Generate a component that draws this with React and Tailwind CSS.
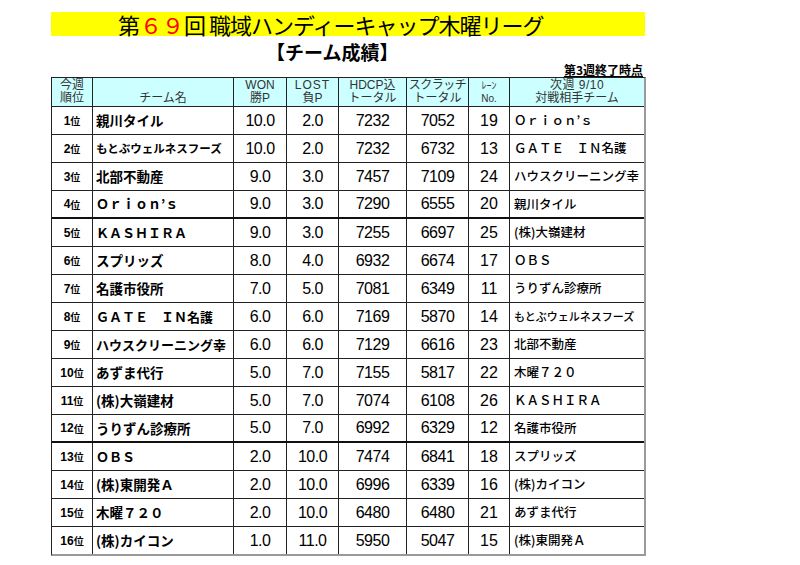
const JP = "font-['Noto_Sans_CJK_JP','Liberation_Sans',sans-serif]";
const NUM = "font-['Liberation_Sans','Noto_Sans_CJK_JP',sans-serif]";

// width of each column, right border included
const COLS = ["w-[41px]", "w-[141px]", "w-[53px]", "w-[52px]", "w-[68px]", "w-[62px]", "w-[41px]", "w-[134px]"];

const rows = [
  { name: "親川タイル", won: "10.0", lost: "2.0", hdcp: "7232", scr: "7052", lane: "19", opp: "Ｏｒｉｏｎ’ｓ" },
  { name: "もとぶウェルネスフーズ", nameSm: true, won: "10.0", lost: "2.0", hdcp: "7232", scr: "6732", lane: "13", opp: "ＧＡＴＥ　ＩＮ名護" },
  { name: "北部不動産", won: "9.0", lost: "3.0", hdcp: "7457", scr: "7109", lane: "24", opp: "ハウスクリーニング幸" },
  { name: "Ｏｒｉｏｎ’ｓ", wide: true, won: "9.0", lost: "3.0", hdcp: "7290", scr: "6555", lane: "20", opp: "親川タイル", thick: true },
  { name: "ＫＡＳＨＩＲＡ", wide: true, won: "9.0", lost: "3.0", hdcp: "7255", scr: "6697", lane: "25", opp: "(株)大嶺建材" },
  { name: "スプリッズ", won: "8.0", lost: "4.0", hdcp: "6932", scr: "6674", lane: "17", opp: "ＯＢＳ" },
  { name: "名護市役所", won: "7.0", lost: "5.0", hdcp: "7081", scr: "6349", lane: "11", opp: "うりずん診療所" },
  { name: "ＧＡＴＥ　ＩＮ名護", wide: true, won: "6.0", lost: "6.0", hdcp: "7169", scr: "5870", lane: "14", opp: "もとぶウェルネスフーズ", oppSm: true },
  { name: "ハウスクリーニング幸", wide: true, won: "6.0", lost: "6.0", hdcp: "7129", scr: "6616", lane: "23", opp: "北部不動産" },
  { name: "あずま代行", won: "5.0", lost: "7.0", hdcp: "7155", scr: "5817", lane: "22", opp: "木曜７２０" },
  { name: "(株)大嶺建材", won: "5.0", lost: "7.0", hdcp: "7074", scr: "6108", lane: "26", opp: "ＫＡＳＨＩＲＡ" },
  { name: "うりずん診療所", won: "5.0", lost: "7.0", hdcp: "6992", scr: "6329", lane: "12", opp: "名護市役所", thick: true },
  { name: "ＯＢＳ", wide: true, won: "2.0", lost: "10.0", hdcp: "7474", scr: "6841", lane: "18", opp: "スプリッズ" },
  { name: "(株)東開発Ａ", won: "2.0", lost: "10.0", hdcp: "6996", scr: "6339", lane: "16", opp: "(株)カイコン" },
  { name: "木曜７２０", won: "2.0", lost: "10.0", hdcp: "6480", scr: "6480", lane: "21", opp: "あずま代行" },
  { name: "(株)カイコン", won: "1.0", lost: "11.0", hdcp: "5950", scr: "5047", lane: "15", opp: "(株)東開発Ａ" },
];

function HeadCell({ w, top, bottom, last }) {
  return (
    <div className={`${w} h-full flex flex-col items-center justify-center whitespace-nowrap ${last ? "" : "border-r border-[#222]"}`}>
      <span className="leading-[13px]">{top}</span>
      <span className="leading-[13px]">{bottom}</span>
    </div>
  );
}

function Row({ row, idx, last }) {
  const cell = "h-full flex items-center border-r border-[#222]";
  const num = `justify-center text-[16px] tracking-[-0.5px] ${NUM}`;
  const border = last ? "h-[27px]" : row.thick ? "h-[28px] border-b-2 border-[#111]" : "h-[28px] border-b border-[#222]";
  return (
    <div className={`flex ${border}`}>
      <div className={`${COLS[0]} ${cell} justify-center font-bold ${JP}`}>
        <span className={`text-[12px] ${NUM}`}>{idx + 1}</span>
        <span className="text-[10px]">位</span>
      </div>
      <div className={`${COLS[1]} ${cell} pl-[3px] font-bold ${JP} whitespace-nowrap ${row.nameSm ? "text-[11.5px]" : row.wide ? "text-[13px]" : "text-[13.5px]"}`}>
        {row.name}
      </div>
      <div className={`${COLS[2]} ${cell} ${num}`}>{row.won}</div>
      <div className={`${COLS[3]} ${cell} ${num}`}>{row.lost}</div>
      <div className={`${COLS[4]} ${cell} ${num}`}>{row.hdcp}</div>
      <div className={`${COLS[5]} ${cell} ${num}`}>{row.scr}</div>
      <div className={`${COLS[6]} ${cell} justify-center text-[16px] ${NUM}`}>{row.lane}</div>
      <div className={`${COLS[7]} h-full flex items-center pl-[4px] font-medium ${JP} whitespace-nowrap ${row.oppSm ? "text-[11px]" : "text-[12.5px]"}`}>
        {row.opp}
      </div>
    </div>
  );
}

export default function App() {
  return (
    <div className={`w-[800px] h-[565px] bg-white text-black pt-[12px] ${JP}`}>
      {/* title band */}
      <div className="ml-[51px] w-[594px] h-[24px] bg-[#ffff00] pl-[67px] flex items-center text-[22px] leading-[22px] whitespace-nowrap">
        <span>第</span>
        <span className="text-[#ff0000]">６９</span>
        <span className="tracking-[-1px]">回 職域ハンディーキャップ木曜リーグ</span>
      </div>

      <div className="ml-[51px] w-[595px] h-[27px] pl-[215px] flex items-end">
        <span className="text-[19px] leading-[22px] font-bold">【チーム成績】</span>
      </div>
      <div className="ml-[51px] w-[595px] h-[14px] pr-[3px] flex justify-end">
        <span className="text-[12px] leading-[13px] font-bold underline underline-offset-[1px]">第3週終了時点</span>
      </div>

      {/* standings table */}
      <div className="ml-[51px] w-[595px] border-l border-t border-[#222] border-r-2 border-b-2 border-r-[#9a9a9a] border-b-[#9a9a9a]">
        <div className={`flex h-[29px] bg-[#ccffff] border-b border-[#222] text-[12px] text-[#333] ${NUM}`}>
          <HeadCell w={COLS[0]} top="今週" bottom="順位" />
          <div className={`${COLS[1]} h-full flex items-end justify-center pb-[1px] border-r border-[#222]`}>
            <span className="leading-[14px]">チーム名</span>
          </div>
          <HeadCell w={COLS[2]} top="WON" bottom="勝P" />
          <HeadCell w={COLS[3]} top={<span className="tracking-[1px]">LOST</span>} bottom="負P" />
          <HeadCell w={COLS[4]} top="HDCP込" bottom="トータル" />
          <HeadCell w={COLS[5]} top={<span className="tracking-[-0.5px]">スクラッチ</span>} bottom="トータル" />
          <HeadCell w={COLS[6]} top={<span className="text-[10px]">ﾚｰﾝ</span>} bottom={<span className="text-[10px]">No.</span>} />
          <HeadCell w={COLS[7]} top={<span className="tracking-[0.5px]">次週 9/10</span>} bottom="対戦相手チーム" last />
        </div>
        {rows.map((row, i) => (
          <Row key={i} row={row} idx={i} last={i === rows.length - 1} />
        ))}
      </div>
    </div>
  );
}
